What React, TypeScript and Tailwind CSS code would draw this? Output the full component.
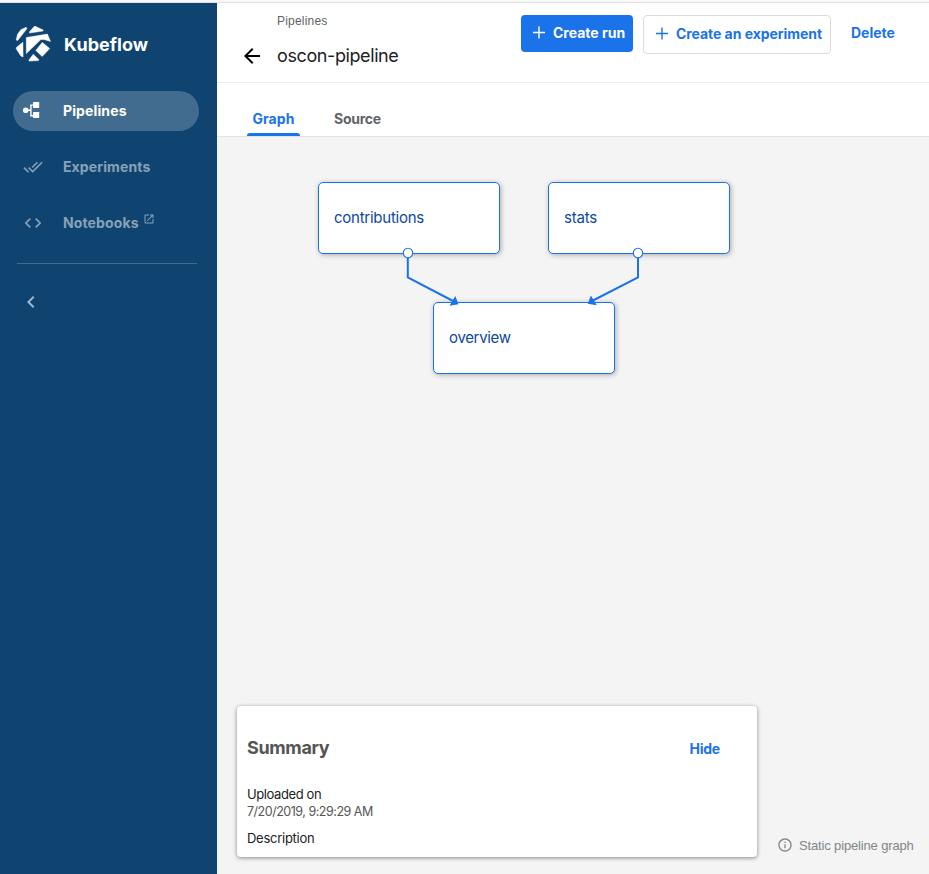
import React from "react";
import { MdArrowBack, MdDoneAll, MdCode, MdOpenInNew, MdChevronLeft, MdInfoOutline } from "react-icons/md";

function Logo() {
  return (
    <svg className="h-9 w-9 shrink-0" viewBox="15 25.8 36 36" fill="#fff" stroke="#fff" strokeWidth="0.5" strokeLinejoin="round">
      <path d="M16.2 39.8 17.6 34 20.8 29.6 26.3 27 26.8 28.6 17.6 40.4Z" />
      <path d="M34.6 25.9 43.2 29.8 43 30.8 29.4 32.9 29.8 31.2Z" />
      <path d="M26.3 37.3 47.4 33.9 50.5 41.2 44.2 39.3 40.8 39.4 26.3 53.4Z" />
      <path d="M42.3 42.2 49.7 48.4 42.2 56.2 35.8 50.2Z" />
      <path d="M22.9 42 23.1 56.7 20.9 55.8 16.2 48.6 16.4 47.2Z" />
      <path d="M33.3 54 38.8 59.4 38.4 60.4 29.2 60.9 28.9 59.8Z" />
    </svg>
  );
}

function PipelineIcon() {
  return (
    <svg className="mt-px h-5 w-5" viewBox="0 0 20 20" fill="currentColor">
      <circle cx="2.7" cy="8.3" r="2.8" />
      <path d="M5 7.6h2.2V2.4H11v1.4H8.6v9.2H11v1.4H7.2V9H5Z" />
      <rect x="10" y="0" width="6.2" height="6" rx=".4" />
      <rect x="10" y="10" width="6.2" height="6" rx=".4" />
    </svg>
  );
}

function Plus() {
  return (
    <svg className="mb-px h-[18px] w-[18px] shrink-0" viewBox="0 0 18 18" fill="none" stroke="currentColor" strokeWidth="1.4">
      <path d="M9 2.5V14.5M3 8.5H15" />
    </svg>
  );
}

function NavItem({ icon, children, active }: { icon: React.ReactNode; children: React.ReactNode; active?: boolean }) {
  return (
    <div className={`mx-[13px] flex h-10 w-[186px] items-center rounded-full pl-[10px] text-[14px] font-bold tracking-[0.12px] ${active ? "bg-[#416b8f] text-white" : "text-[#87a1b7]"}`}>
      <span className="flex w-10 items-center">{icon}</span>
      {children}
    </div>
  );
}

function Node({ label, place, spacing }: { label: string; place: string; spacing: string }) {
  return (
    <div className={`absolute flex h-[72px] w-[182px] items-center rounded-[5px] border border-[#1a73e8] bg-white pt-px pl-[15px] text-[15px] text-[#0d47a1] shadow-[1px_1px_5px_#aaa] ${place}`}>
      <span className={spacing}>{label}</span>
    </div>
  );
}

export default function App() {
  return (
    <div className="flex h-[874px] w-[929px] flex-col overflow-hidden bg-white font-['Inter',sans-serif]">
      <div className="h-[3px] shrink-0 border-b border-[#dedede] bg-[#f8f8f8]" />
      <div className="flex min-h-0 flex-1">
        <aside className="flex w-[217px] shrink-0 flex-col bg-[#0f4471]">
          <div className="flex h-[88px] items-center gap-[13px] pb-[7px] pl-[15px]">
            <Logo />
            <span className="pt-0.5 text-[18px] font-bold tracking-[0.05px] text-white">Kubeflow</span>
          </div>
          <nav className="flex flex-col gap-4">
            <NavItem active icon={<PipelineIcon />}><span className="pb-0.5">Pipelines</span></NavItem>
            <NavItem icon={<MdDoneAll size={20} />}><span className="pb-0.5">Experiments</span></NavItem>
            <NavItem icon={<MdCode size={20} />}>
              <span className="pb-0.5">Notebooks</span>
              <MdOpenInNew size={12} className="mb-2 ml-[4.5px]" />
            </NavItem>
          </nav>
          <div className="mt-5 ml-[17px] w-[180px] border-t border-[#416b8f]" />
          <MdChevronLeft size={24} className="mt-[26px] ml-[19px] text-[#a3b7c8]" />
        </aside>
        <main className="flex min-w-0 flex-1 flex-col">
          <header className="flex h-20 shrink-0 items-start border-b border-[#ececec]">
            <div className="w-[304px] pl-[23px]">
              <div className="mt-[9px] ml-[37px] font-['Liberation_Sans',sans-serif] text-[12px] leading-[18px] tracking-[0.2px] text-[#5f6368]">Pipelines</div>
              <div className="mt-[14px] flex items-center text-[#202124]">
                <MdArrowBack size={24} className="text-black" />
                <h1 className="ml-[13px] text-[18px] leading-6 tracking-[-0.4px]">oscon-pipeline</h1>
              </div>
            </div>
            <div className="mt-3 flex items-start text-[14px] font-bold text-[#1a73e8]">
              <button className="flex h-[37px] w-28 items-center rounded bg-[#1a73e8] pl-[9px] text-white">
                <Plus /><span className="ml-[5px] pb-0.5 tracking-[0px] whitespace-nowrap">Create run</span>
              </button>
              <button className="ml-[10px] flex h-[39px] w-[188px] items-center rounded border border-[#dadce0] pl-[9px]">
                <Plus /><span className="ml-[5px] pb-0.5 tracking-[-0.05px] whitespace-nowrap">Create an experiment</span>
              </button>
              <button className="ml-5 h-[37px] pb-0.5"><span>Delete</span></button>
            </div>
          </header>
          <div className="flex h-[54px] shrink-0 border-b border-[#e4e4e4] pl-[30px] text-[14px] font-bold text-[#5f6368]">
            <div className="flex w-[53px] flex-col items-center justify-end text-[#1a73e8]">
              <span className="leading-5 tracking-[0.1px]">Graph</span>
              <div className="mt-[4px] h-[3px] w-[53px] rounded-t-[3px] bg-[#1a73e8]" />
            </div>
            <div className="ml-[34px] flex items-end pb-[7px] leading-5"><span className="tracking-[-0.25px]">Source</span></div>
          </div>
          <section className="relative flex flex-1 flex-col justify-end bg-[#f4f4f4]">
            <Node label="contributions" place="left-[101px] top-[45px]" spacing="tracking-[-0.25px]" />
            <Node label="stats" place="left-[331px] top-[45px]" spacing="tracking-[-0.2px]" />
            <Node label="overview" place="left-[216px] top-[165px]" spacing="tracking-[-0.32px]" />
            <svg className="absolute top-[105px] left-[181px] h-[70px] w-[250px]" viewBox="0 0 250 70" fill="none" stroke="#1a73e8" strokeWidth="2">
              <path d="M9.8 15V35.5L56 59.5" />
              <path d="M240 15V35.5L194 59" />
              <path d="M60.5 62.3 57.3 54 51.5 63.8Z M189.7 61.8 192.9 53.5 198.8 63.2Z" fill="#1a73e8" stroke="none" />
              <circle cx="10" cy="11" r="4.7" fill="#fff" strokeWidth="1.1" />
              <circle cx="240" cy="11" r="4.7" fill="#fff" strokeWidth="1.1" />
            </svg>
            <div className="flex items-end pb-[17px] pl-5">
              <div className="flex h-[151px] w-[520px] flex-col rounded bg-white px-[10px] text-[13px] leading-[17px] text-[#202124] shadow-[0_1px_4px_rgba(0,0,0,0.45)]">
                <div className="mt-[30px] flex h-[22px] items-center justify-between pr-[27px]">
                  <h2 className="text-[18px] font-bold tracking-[-0.35px] text-[#555]">Summary</h2>
                  <span className="pt-0.5 text-[14px] font-bold tracking-[-0.2px] text-[#1a73e8]">Hide</span>
                </div>
                <div className="mt-[28px]"><span className="tracking-[-0.4px]">Uploaded on</span></div>
                <div className="text-[#555]"><span className="text-[12.5px] tracking-[-0.48px]">7/20/2019, 9:29:29 AM</span></div>
                <div className="mt-[10px]"><span className="tracking-[-0.27px]">Description</span></div>
              </div>
              <div className="ml-5 flex h-6 items-center font-['Liberation_Sans',sans-serif] text-[13px] text-[#80868b]">
                <MdInfoOutline size={16} /><span className="ml-[6px] pt-px tracking-[-0.15px] whitespace-nowrap">Static pipeline graph</span>
              </div>
            </div>
          </section>
        </main>
      </div>
    </div>
  );
}
